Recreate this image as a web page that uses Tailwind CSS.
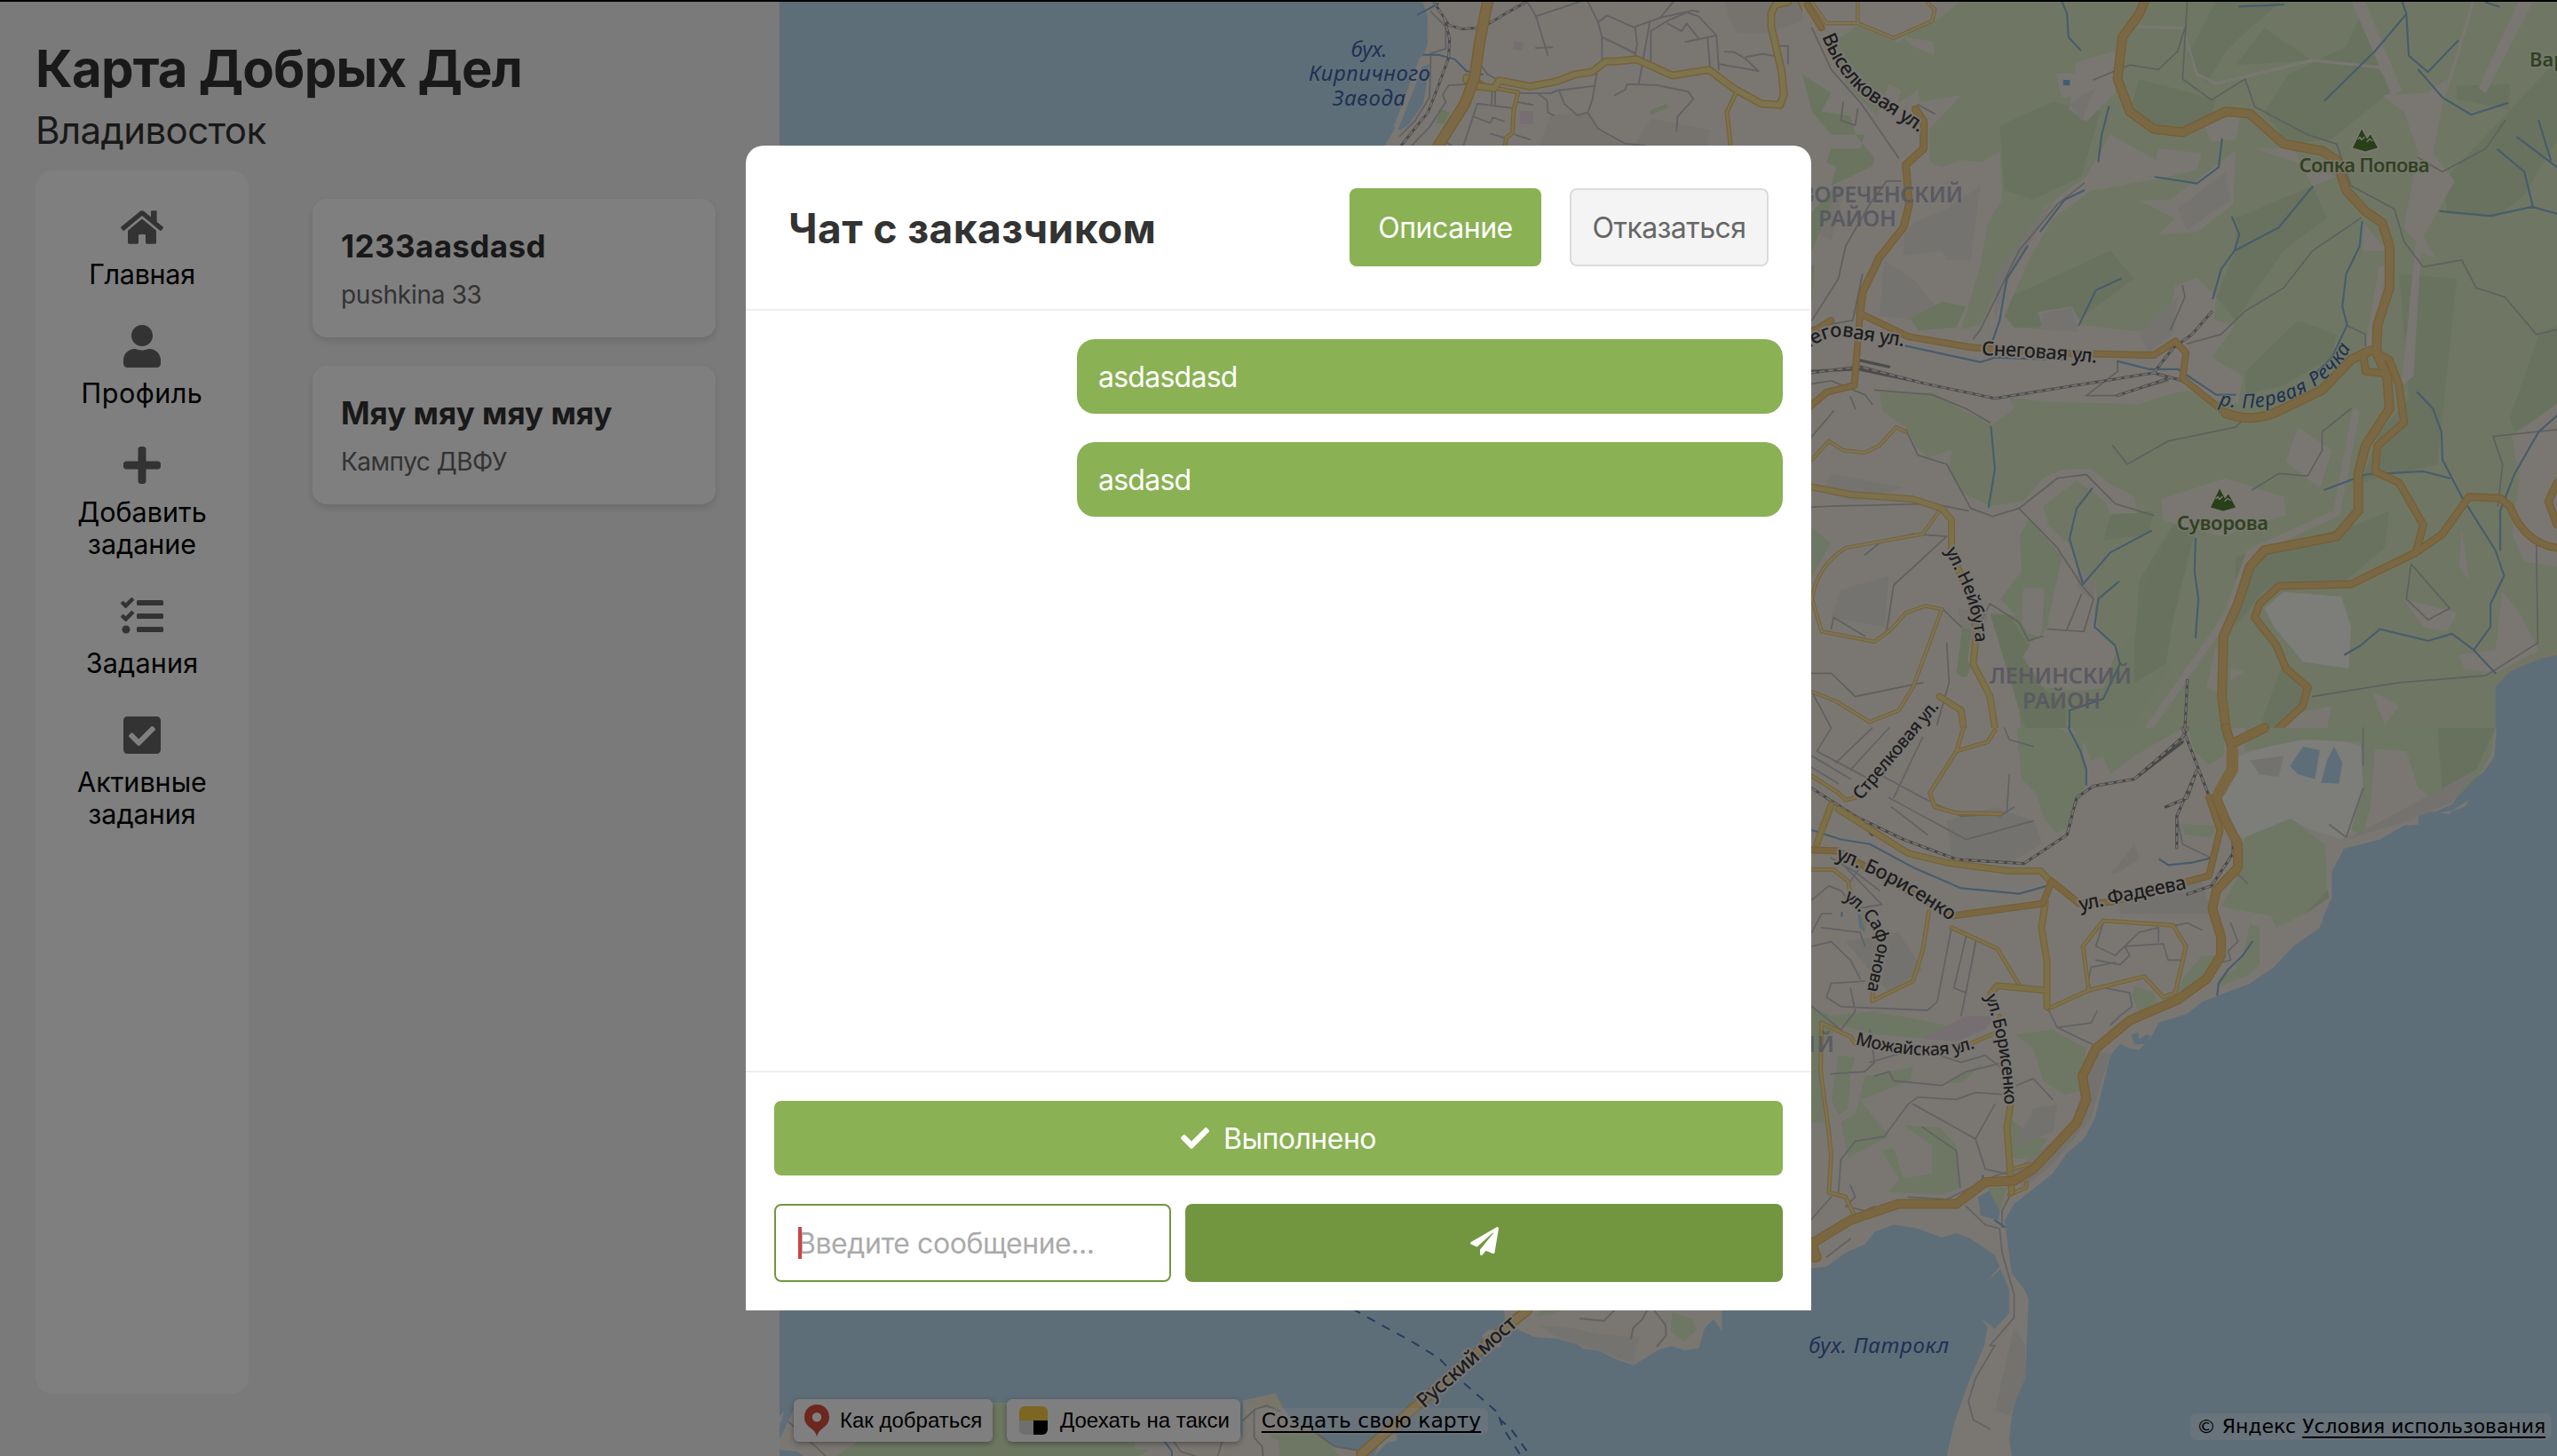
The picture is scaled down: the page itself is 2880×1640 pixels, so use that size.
<!DOCTYPE html>
<html lang="ru">
<head>
<meta charset="utf-8">
<title>Карта Добрых Дел</title>
<script src="https://cdn.jsdelivr.net/npm/@tailwindcss/browser@4"></script>
</head>
<body class="relative h-[1640px] w-[2880px] overflow-hidden bg-[#f5f5f5] font-[Inter,sans-serif] text-[#333]">

<div class="flex h-full">
  <!-- Sidebar -->
  <aside class="flex h-full w-[878px] shrink-0 flex-col px-10 pt-[42px]">
    <h1 class="text-[58px] leading-[70px] font-bold tracking-[-0.75px]">Карта Добрых Дел</h1>
    <p class="mt-[9px] text-[42px] leading-[52px] tracking-[-0.6px]">Владивосток</p>
    <div class="mt-[19px] flex">
      <nav class="flex h-[1378px] w-60 flex-col items-center gap-[39px] rounded-[20px] bg-white pt-10 text-center text-[30.5px] leading-9 text-black">
        <a class="flex flex-col items-center gap-[11px]">
          <svg class="size-12 fill-[#666]" viewBox="0 0 576 512"><path d="M280.37 148.26L96 300.11V464a16 16 0 0 0 16 16l112.06-.29a16 16 0 0 0 15.92-16V368a16 16 0 0 1 16-16h64a16 16 0 0 1 16 16v95.64a16 16 0 0 0 16 16.05L464 480a16 16 0 0 0 16-16V300L295.67 148.26a12.19 12.19 0 0 0-15.3 0zM571.6 251.47L488 182.56V44.05a12 12 0 0 0-12-12h-56a12 12 0 0 0-12 12v72.61L318.47 43a48 48 0 0 0-61 0L4.34 251.47a12 12 0 0 0-1.6 16.9l25.5 31A12 12 0 0 0 45.15 301l235.22-193.74a12.19 12.19 0 0 1 15.3 0L530.9 301a12 12 0 0 0 16.9-1.6l25.5-31a12 12 0 0 0-1.7-16.93z"/></svg>
          <span class="tracking-[-0.3px]">Главная</span>
        </a>
        <a class="flex flex-col items-center gap-[11px]">
          <svg class="size-12 fill-[#666]" viewBox="0 0 448 512"><path d="M224 256c70.7 0 128-57.3 128-128S294.7 0 224 0 96 57.3 96 128s57.3 128 128 128zm89.6 32h-16.7c-22.2 10.2-46.9 16-72.9 16s-50.6-5.8-72.9-16h-16.7C60.2 288 0 348.2 0 422.4V464c0 26.5 21.5 48 48 48h352c26.5 0 48-21.5 48-48v-41.6c0-74.2-60.2-134.4-134.4-134.4z"/></svg>
          <span class="tracking-[0.5px]">Профиль</span>
        </a>
        <a class="flex flex-col items-center gap-[11px]">
          <svg class="size-12 fill-[#666]" viewBox="0 0 448 512"><path d="M416 208H272V64c0-17.67-14.33-32-32-32h-32c-17.67 0-32 14.33-32 32v144H32c-17.67 0-32 14.33-32 32v32c0 17.67 14.33 32 32 32h144v144c0 17.67 14.33 32 32 32h32c17.67 0 32-14.33 32-32V304h144c17.67 0 32-14.33 32-32v-32c0-17.67-14.33-32-32-32z"/></svg>
          <span>Добавить<br>задание</span>
        </a>
        <a class="flex flex-col items-center gap-[11px]">
          <svg class="size-12 fill-[#666]" viewBox="0 0 512 512"><path d="M139.61 35.5a12 12 0 0 0-17 0L58.93 98.81l-22.7-22.12a12 12 0 0 0-17 0L3.53 92.41a12 12 0 0 0 0 17l47.59 47.4a12.78 12.78 0 0 0 17.61 0l15.59-15.62L156.52 69a12.09 12.09 0 0 0 .09-17zm0 159.19a12 12 0 0 0-17 0l-63.68 63.72-22.7-22.1a12 12 0 0 0-17 0L3.53 252a12 12 0 0 0 0 17L51 316.5a12.77 12.77 0 0 0 17.6 0l15.7-15.69 72.2-72.22a12 12 0 0 0 .09-16.9zM64 368c-26.49 0-48.59 21.5-48.59 48S37.53 464 64 464a48 48 0 0 0 0-96zm432 16H208a16 16 0 0 0-16 16v32a16 16 0 0 0 16 16h288a16 16 0 0 0 16-16v-32a16 16 0 0 0-16-16zm0-320H208a16 16 0 0 0-16 16v32a16 16 0 0 0 16 16h288a16 16 0 0 0 16-16V80a16 16 0 0 0-16-16zm0 160H208a16 16 0 0 0-16 16v32a16 16 0 0 0 16 16h288a16 16 0 0 0 16-16v-32a16 16 0 0 0-16-16z"/></svg>
          <span class="tracking-[0.2px]">Задания</span>
        </a>
        <a class="flex flex-col items-center gap-[11px]">
          <svg class="size-12 fill-[#666]" viewBox="0 0 448 512"><path d="M400 480H48c-26.51 0-48-21.49-48-48V80c0-26.51 21.49-48 48-48h352c26.51 0 48 21.49 48 48v352c0 26.51-21.49 48-48 48zm-204.686-98.059l184-184c6.248-6.248 6.248-16.379 0-22.627l-22.627-22.627c-6.248-6.248-16.379-6.249-22.628 0L184 302.745l-70.059-70.059c-6.248-6.248-16.379-6.248-22.628 0l-22.627 22.627c-6.248 6.248-6.248 16.379 0 22.627l104 104c6.249 6.25 16.379 6.25 22.628.001z"/></svg>
          <span>Активные<br>задания</span>
        </a>
      </nav>
      <div class="ml-[72px] flex flex-col gap-8 pt-8">
        <div class="h-[156px] w-[454px] rounded-2xl bg-white px-8 pt-8 shadow-[0_4px_8px_rgba(0,0,0,0.12)]">
          <h2 class="text-[35px] leading-[42px] font-bold tracking-[0.4px]">1233aasdasd</h2>
          <p class="mt-[17px] text-[28px] leading-[34px] tracking-[-0.3px] text-[#666]">pushkina 33</p>
        </div>
        <div class="h-[156px] w-[454px] rounded-2xl bg-white px-8 pt-8 shadow-[0_4px_8px_rgba(0,0,0,0.12)]">
          <h2 class="text-[35px] leading-[42px] font-bold">Мяу мяу мяу мяу</h2>
          <p class="mt-[17px] text-[28px] leading-[34px] tracking-[-0.5px] text-[#666]">Кампус ДВФУ</p>
        </div>
      </div>
    </div>
  </aside>

  <!-- Map -->
  <main class="relative h-full w-[2002px] shrink-0 overflow-hidden bg-[#f4eee6]">
    <svg class="absolute inset-0 h-full w-full" viewBox="878 0 2002 1640" fill="none" stroke-linecap="round" stroke-linejoin="round">
      <!-- western bay and southern waters -->
      <path fill="#bcdcf2" d="M878 0H1602L1608 20V50L1603 62L1597 77L1610 72L1609 80L1603 117L1587 140L1577 147L1572 143L1560 164H878ZM878 1400H2050V1640H878Z"/>

      <!-- north shore, upper centre -->
      <g transform="translate(1560 0) scale(.3333)" class="[&_path]:[vector-effect:non-scaling-stroke]">
        <path stroke="#f4eee6" stroke-width="6" d="M125 200L80 320L40 425"/>
        <path fill="#d2eab8" d="M190 370L218 380L200 420L172 415ZM892 375L950 350L960 362L900 388ZM1420 255H1440V320L1425 290Z"/>
        <path fill="#ecdde4" d="M435 140L468 142L465 170L432 168ZM455 375H500V420H455Z"/>
        <path fill="#ece7df" d="M1150 0H1440V60L1300 110H1190L1160 60ZM560 390L690 380L720 440L810 492H520ZM900 400L1100 440L1090 492H840Z"/>
        <g stroke="#c4c4c6" stroke-width="2">
          <path d="M480 5L510 55L550 187M510 55L660 5M510 162L565 160M685 5L720 75L733 125V200M720 75L750 52L840 92L930 60L975 5M733 125L845 180M845 92L852 150L845 188M895 72L858 280M898 210V105L955 70L1020 42L1060 55L1120 120L1128 235M1098 225L1090 130M1015 142L1120 120M955 80L1002 105L1020 80L1060 130M930 60L1040 35L1060 40M1148 175L1180 176L1220 200L1262 240L1130 217M1220 193L1275 182L1315 188M1328 155H1362V215M1440 195L1430 210L1440 230M715 250L700 340L685 380L720 435L810 485L880 492M588 305L710 290M588 305L605 350L650 390L685 380M452 315L560 315L590 303M520 318L548 340L550 380L570 390M776 322L812 303L818 284L920 288L1025 310L1042 335L988 395L985 442M362 310L360 355M372 308V355M450 345L500 355M312 350L430 365M312 350L265 492M300 395L355 415L365 397L402 410M358 452L400 465M440 455L490 472M210 482L225 492M155 40L205 90V165L155 180L150 330L100 410L50 460M280 285L215 288L195 320L205 345L150 430L90 492M325 220L345 250L380 270"/>
        </g>
        <path stroke="#86b6dc" stroke-width="2" d="M130 185H180L235 200L275 240L330 252M110 50L180 12"/>
        <g stroke="#999" stroke-width="3"><path d="M165 8L200 60L215 85L260 98L330 92L400 50L475 8M200 60L218 130L215 195L180 290L145 380L80 460L55 492"/></g>
        <g stroke="#f4eee6" stroke-width="1.5" stroke-dasharray="5 5"><path d="M165 8L200 60L215 85L260 98L330 92L400 50L475 8M200 60L218 130L215 195L180 290L145 380L80 460L55 492"/></g>
        <g stroke="#f0c26c"><path stroke-width="9" d="M295 270H275V262M300 290L370 298L385 272L490 292L580 275L640 252L700 243L745 208H780L850 200L970 255L1095 236L1180 300L1270 350L1335 355L1348 320L1340 240L1305 90V45L1320 15L1360 8M1405 0L1440 75"/><path stroke-width="5" d="M300 262L350 300M385 300L450 312L435 370L430 450L410 465L405 492M1190 305L1155 380L1168 492"/></g>
        <g stroke="#f7e89c"><path stroke-width="6" d="M295 270H275V262M300 290L370 298L385 272L490 292L580 275L640 252L700 243L745 208H780L850 200L970 255L1095 236L1180 300L1270 350L1335 355L1348 320L1340 240L1305 90V45L1320 15L1360 8M1405 0L1440 75"/><path stroke-width="2.5" d="M385 300L450 312L435 370L430 450L410 465L405 492M1190 305L1155 380L1168 492"/></g>
        <path stroke="#edbf68" stroke-width="13" d="M348 0L320 140L302 265L270 350L180 492"/>
        <path stroke="#f8d38a" stroke-width="10" d="M348 0L320 140L302 265L270 350L180 492"/>
      </g>

      <!-- north-east: forested hills -->
      <g transform="translate(2030 0) scale(.5421 .523)" class="[&_path]:[vector-effect:non-scaling-stroke]">
        <path fill="#deefc8" d="M0 0H1568V1570H0Z"/>
        <g fill="#d3e4bf">
          <path d="M860 0H1000L930 60L880 110L840 180L800 120ZM960 240L1010 160L1130 100L1165 20L1230 190L1100 300L1010 310ZM1360 185L1470 180V235L1360 215ZM1330 390L1568 130V300L1500 420L1440 470L1340 460ZM700 170L860 215L840 270L740 290L680 240ZM430 640L640 540L690 600L560 700L400 710ZM410 270L520 220L620 240L580 380L480 430L420 410ZM900 470L1060 400L1090 470L1000 540L900 690L860 640L900 540ZM920 800L1030 690L1110 720L1100 770L1000 830L920 850ZM1240 590L1360 600L1320 1000L1160 1040L1200 930L1260 860ZM1470 900L1530 720L1568 700V870L1480 930ZM700 1250L770 1130L820 1130L760 1380L740 1440L690 1500L690 1400ZM900 1200L1150 1130L1220 1100L1210 1180L1130 1250L960 1270L900 1350ZM960 60L1060 130L900 140ZM640 1110L730 1100L720 1150L625 1165ZM1000 1420L1060 1480L1030 1568H950Z"/>
        </g>
        <!-- built-up land and clearings -->
        <g fill="#f4eee6">
          <path d="M0 0H330L285 40L235 60L200 92L115 55L65 90L90 180L155 250L180 180L205 195L195 225L240 195L245 220L330 205L262 280L265 350L290 360L330 345L375 350L410 325L415 430L385 480L370 570L350 640L330 710L370 700L430 570L500 450L590 380L640 290L735 345L740 320L830 330L820 365L740 385L600 410L520 470L470 560L420 680L440 705L500 710L490 672L560 660L580 700L700 715L760 690L775 615L820 598L860 640L855 690L900 700L850 770L915 810L905 870L850 860L800 840L760 850L700 870L500 865L430 855L440 880L395 915L335 885L270 845H160L165 885L215 920L235 960L260 985L310 970L305 1005L330 1060L390 1090L460 1080L500 1030L540 1012L600 1010L635 1040L690 1070L695 1105L640 1105L630 1080L570 1035L500 1090L510 1130L560 1180L600 1290L620 1370L655 1400L640 1460L560 1490L620 1568H0Z"/>
          <path d="M570 135L650 110V200L590 262L555 235ZM527 158H570V205L540 210ZM700 432L765 430L830 380L900 325L895 440L820 500L740 505L775 470ZM745 1075L880 1030L1000 1070L1005 1108L870 1155L750 1120ZM1030 920L1100 970L1075 1050L1005 995ZM1165 480L1215 540L1165 540ZM830 260L910 250L900 300L850 305ZM940 320L1020 320L1060 400L1110 380L1000 340ZM1205 205L1300 200L1340 170L1310 330L1355 390L1290 510L1315 555L1285 545L1270 810L1245 830L1275 520L1250 490L1280 330L1250 240ZM1140 0H1168L1245 195L1225 205ZM1490 0H1520L1420 200L1405 190ZM1475 940L1568 870V1220L1500 1210L1475 1150L1490 1030ZM1455 1275L1490 1320L1530 1400L1440 1450L1375 1440L1365 1410L1440 1400ZM1370 1140L1385 1250L1365 1220ZM1250 1290L1360 1320L1340 1360L1290 1350ZM1185 1490L1240 1520L1210 1560ZM1010 1540L1100 1520L1090 1568H990ZM860 1390L880 1500L840 1480ZM890 1440L920 1445L890 1465ZM210 80L270 90L275 118L230 100Z"/>
        </g>
        <path fill="#deefc8" d="M340 985L362 985L360 1010L340 1005Z"/>
        <g stroke="#f4eee6"><path stroke-width="8" d="M1205 580L1175 760M1150 890L1110 1105L930 1190L880 1330L800 1450L720 1568"/><path stroke-width="3" d="M700 58L790 60L820 160L860 180L1060 130L1200 145L1230 190M1395 0L1340 190L1310 240"/></g>
        <path fill="#fbfaf4" d="M960 1310L1000 1275L1120 1285L1140 1350L1135 1440L1040 1425L980 1350Z"/>
        <g fill="#ebe6de">
          <path d="M230 480L300 450L370 400L350 560L300 560L290 540L210 550V510ZM40 430L90 400L60 520L30 500ZM170 560L230 600L310 700L160 680ZM500 675L560 662L575 715L495 710ZM590 200L610 190L580 260L555 225ZM60 1020L210 1050L110 1080L40 1060ZM80 1270L180 1240L170 1350L60 1330ZM780 450L880 370L890 430L800 495ZM700 720L780 640L770 720L720 760ZM400 600L500 450L520 440L430 600L400 690Z"/>
        </g>
        <g fill="#d5e8bf">
          <path d="M0 160L60 200L40 240L100 250L110 290L150 340L145 358L60 400L70 360L50 350L60 320L120 320L130 290L60 290L20 240ZM225 685L290 650L340 660L320 705L240 712ZM0 580L25 570L20 650ZM0 480L70 400L60 440L20 540ZM325 1420L355 1430L340 1460L320 1450Z"/><path fill="#d9eecb" d="M0 1120L60 1170L20 1240H0Z"/>
        </g>
        <!-- woods around the Leninsky district -->
        <g transform="translate(18.4 726.6) scale(.6149 .6373)">
          <path fill="#dbecc5" d="M735 615L850 745L800 970L775 1024L745 1030L720 1075L780 1180L900 1195L990 1180L1030 1060L1100 990L1200 1090L1230 1090L1010 1440L1000 1500L970 1480L950 1410L935 1510L920 1540L890 1415L840 1450V1560H720L710 1480L755 1450L750 1380L715 1375L700 1250L605 930L690 940L640 885L710 790L705 670Z"/>
          <path fill="#d0e2bb" d="M1215 650L1290 660L1230 900L1200 1100L1090 1170L1095 1000L1130 840ZM605 935L670 940L740 1050L720 1080L790 1190L860 1240V1400L780 1480L700 1250Z"/>
          <path fill="#f4eee6" d="M718 846L788 850L780 990L770 1010L730 1000L712 960ZM845 755L960 830L965 890L920 1000L1025 1055L990 1185L900 1195L780 1180L715 1080L745 1030L810 980L800 960Z"/>
          <path fill="#ebe6de" d="M495 915L600 935L560 1040L520 1060ZM900 770L960 830L955 890L900 850Z"/>
          <path fill="#d3e6bd" d="M510 980L540 990L525 1130L510 1150L492 1130Z"/>
        </g>
        <path fill="#bcdcf2" d="M1440 1480L1470 1445L1568 1405V1570H1440Z"/>
        <path stroke="#f3e4c8" stroke-width="3" d="M1468 1445L1510 1420L1568 1408"/>
        <path fill="#86b6dc" d="M542 172H556V184H542Z"/>
        <g stroke="#bfc1bb" stroke-width="1.8">
          <path d="M800 0L790 170L850 215L920 170L940 230L1050 290L1110 310L1140 400L1230 450L1250 520L1290 575L1370 560L1400 620L1460 640L1525 720L1568 710M605 172L680 140L740 150L780 110L795 60M1460 260L1420 320L1330 370L1280 340M800 740L870 720L920 670L1000 620L1060 540L1160 470M765 710L795 640L790 615M645 960L675 1000L760 950L900 920L915 905M935 1055L990 1020L1050 1025L1080 970V930L1140 880M1170 745V720L1130 700M1568 925L1435 940L1455 1000L1445 1090M1525 1160L1528 1385L1420 1455L1240 1470L1060 1500M1265 1215L1255 1290L1300 1335L1345 1310L1265 1215M150 840L270 850L340 880L390 910M20 60L60 150L120 220L200 340M240 225L275 245M85 220L80 260L110 270L115 235M205 390L175 390L140 440L90 530L75 600L20 690M125 590L105 690L20 705M0 830L60 820L130 850L145 870M20 940L65 885M100 855L110 880M20 1092L60 1090L270 1085L345 1100M215 925L240 980L300 1000L350 1095L395 1112L450 1095L530 1030L590 1022L650 1085L730 1110M450 1095L530 1180L580 1260L605 1290L585 1360L510 1355M580 1280L550 1355M130 1195L160 1170L230 1150L300 1155L190 1260L175 1360M60 1355L65 1330L130 1370M0 1450L60 1450L110 1500L250 1470M300 1385L305 1470L280 1560M290 1310L330 1350M20 1490L60 1568M370 1340L390 1300L450 1340L470 1380L500 1370"/>
          <path d="M355 730L370 710L450 540L530 440L585 395M655 780V800L590 852H650L760 820"/>
        </g>
        <g stroke="#8fb9d8" stroke-width="2.2">
          <path d="M540 5L550 30L553 80L578 108M637 230L622 290L615 348M585 410L545 430L495 498M468 530L425 600L410 690L395 735M733 381L820 395L865 360L872 300M893 468L908 505L898 540L990 490L1060 402M898 540L870 580L853 643M662 600L610 625L575 700M1163 478L1158 530L1130 590L1122 660L1132 700L1100 770L1060 810M215 745L370 780L400 770L550 775M655 778L720 795H780L860 850H900M392 920L400 1010L387 1092M602 1052L570 1095L555 1160L583 1258L640 1190L725 1143M657 1253L615 1290L607 1350L650 1390L660 1430L625 1505L555 1530V1568M817 1160L815 1230L823 1290L817 1372M1085 1055L1170 1022L1290 1015L1345 1030M1278 845L1310 880L1328 930L1330 990L1370 1070L1440 1185L1458 1240L1430 1300V1350L1395 1400L1440 1450M1568 895L1530 930L1480 1020L1450 1100V1185M1127 1410L1160 1390L1200 1355L1300 1380L1350 1365L1395 1400M1085 217L1190 110L1255 30L1245 0M1255 30L1260 120L1300 155L1362 88M1280 150L1330 210L1390 247L1465 222M1325 455L1430 465L1518 445L1500 370L1445 322M1485 295L1568 360M1530 260L1555 345M1515 445L1568 460M908 14L1000 10M1420 5L1447 14"/>
        </g>
        <g stroke="#999" stroke-width="3.2"><path d="M0 805L120 790L250 825L400 858L730 803L790 820L830 850M850 672L810 720L770 750L730 803M655 852L760 815M115 775L180 790M0 800L115 795L240 822M800 1465L795 1568"/></g>
        <g stroke="#efe9e0" stroke-width="1.6" stroke-dasharray="5 5"><path d="M0 805L120 790L250 825L400 858L730 803L790 820L830 850M850 672L810 720L770 750L730 803M655 852L760 815M800 1465L795 1568"/></g>
        <g stroke="#f0c876" stroke-width="4.5"><path d="M20 5L50 50H115L190 82L270 45L275 20L260 5M115 50V0M20 990L55 950L85 970L130 975L160 960L195 920L215 930M20 1290Q30 1220 90 1180L250 1150L285 1100M20 1290L40 1360L150 1382L185 1355L215 1320L255 1305L290 1312L230 1480L200 1530L140 1555M20 1490L70 1510L140 1555"/></g>
        <g stroke="#f9eab0" stroke-width="2.2"><path d="M20 5L50 50H115L190 82L270 45L275 20L260 5M115 50V0M20 990L55 950L85 970L130 975L160 960L195 920L215 930M20 1290Q30 1220 90 1180L250 1150L285 1100M20 1290L40 1360L150 1382L185 1355L215 1320L255 1305L290 1312L230 1480L200 1530L140 1555M20 1490L70 1510L140 1555"/></g>
        <path stroke="#eec672" stroke-width="8" d="M0 1045L100 1065L230 1075L290 1095L310 1120V1190L350 1290L362 1360L355 1430L390 1500L400 1568M285 1500L330 1530L335 1568"/>
        <path stroke="#f6e296" stroke-width="5.5" d="M0 1045L100 1065L230 1075L290 1095L310 1120V1190L350 1290L362 1360L355 1430L390 1500L400 1568M285 1500L330 1530L335 1568"/>
        <g stroke="#eabc66">
          <path stroke-width="8" d="M20 715L60 690M10 10L40 60M0 890L50 845L108 830L120 675L220 725L350 748L510 760L730 765L775 735L797 760L790 815L880 890"/>
          <path stroke-width="9" d="M235 235L252 260V320L215 355L222 440L210 490L160 555L125 630L120 675M1185 755L1220 775L1240 830L1250 910L1195 960L1190 1015L1240 1040L1290 1130L1275 1190M1568 1180Q1500 1170 1470 1090L1450 1073L1385 1070L1330 1150L1275 1190L1140 1258L990 1262L950 1300L940 1330L985 1390L1005 1440L1050 1480L1040 1520L990 1568M1165 760L1170 800L1215 805M1568 1040L1550 1080L1568 1130"/>
          <path stroke-width="11" d="M712 0L700 30L665 80L655 170L680 240L730 278L790 285L880 240L930 245L1000 310L1080 325L1110 345L1130 410L1170 455L1205 480L1220 530V620L1195 700L1193 760L1215 810L1220 880L1170 960L1155 1020V1100L1110 1155L960 1185L930 1220L905 1300L875 1370L872 1500L880 1568M880 890Q930 910 980 890L1080 840L1140 775L1180 755"/>
        </g>
        <g stroke="#f4cf88">
          <path stroke-width="5.5" d="M20 715L60 690M10 10L40 60M0 890L50 845L108 830L120 675L220 725L350 748L510 760L730 765L775 735L797 760L790 815L880 890"/>
          <path stroke-width="6.5" d="M235 235L252 260V320L215 355L222 440L210 490L160 555L125 630L120 675M1185 755L1220 775L1240 830L1250 910L1195 960L1190 1015L1240 1040L1290 1130L1275 1190M1568 1180Q1500 1170 1470 1090L1450 1073L1385 1070L1330 1150L1275 1190L1140 1258L990 1262L950 1300L940 1330L985 1390L1005 1440L1050 1480L1040 1520L990 1568M1165 760L1170 800L1215 805M1568 1040L1550 1080L1568 1130"/>
          <path stroke-width="8.5" d="M712 0L700 30L665 80L655 170L680 240L730 278L790 285L880 240L930 245L1000 310L1080 325L1110 345L1130 410L1170 455L1205 480L1220 530V620L1195 700L1193 760L1215 810L1220 880L1170 960L1155 1020V1100L1110 1155L960 1185L930 1220L905 1300L875 1370L872 1500L880 1568M880 890Q930 910 980 890L1080 840L1140 775L1180 755"/>
        </g>
      </g>

      <!-- south-east: coast -->
      <g transform="translate(2030 820) scale(.5421 .523)" class="[&_path]:[vector-effect:non-scaling-stroke]">
        <path fill="#bcdcf2" d="M0 0H1568V1568H0Z"/>
        <path fill="#f4eee6" d="M0 0H1442L1438 60L1415 95L1380 120L1350 165L1315 180L1280 182V208L1250 210L1200 240L1125 260L1100 310V365L1085 400L1075 430L1020 470L980 515L930 550L830 590L800 615L740 635L725 665L700 693L680 690L660 680L640 705L620 790L608 840L585 885L550 915L520 960L440 1025L420 1060L435 1175L462 1210L470 1230L463 1400L445 1440L435 1480L430 1530L435 1568H300L315 1500L345 1410L378 1330L385 1290L372 1272L400 1294L430 1260V1210L412 1165L385 1190L410 1160L400 1135L350 1100L320 1088L290 1097L240 1078L190 1070L150 1085L130 1112L90 1130L50 1160L0 1165ZM1325 182L1350 178L1345 186ZM1350 178L1385 155L1375 170Z"/>
        <path fill="#fafaf4" d="M905 60L1000 30L1090 20L1165 40V130L1140 225L1120 240L1060 220L1010 195L920 240L880 210L870 150Z"/>
        <path fill="#bcdcf2" d="M683 660L697 655L700 670L715 660L725 662L712 680L690 682ZM1013 82L1040 40L1075 48L1065 110L1030 100ZM1090 70L1105 40L1122 75L1115 120L1078 118ZM365 1010L400 990L415 1000L408 1060L370 1050ZM115 400L135 410L130 440L118 430Z"/>
        <g fill="#dbefc6">
          <path d="M445 0H530L580 20L590 120L550 215L530 228L505 200L485 140L455 110ZM560 0H790L690 60L640 100L625 60L600 70L590 40ZM800 0H880L875 60L845 80L815 50ZM920 0H1440L1430 60L1410 95L1360 150L1320 160L1280 130L1255 50L1190 45L1180 170L1165 230L1140 220L1165 130L1160 30L1040 25L920 50ZM920 235L1015 195L1085 250L1090 300L1085 370L1035 405L985 430L975 405L870 385L900 330ZM788 207L860 210L850 235L795 230ZM930 420L950 430V510L930 530L870 555L865 540L900 520L920 470ZM790 540L830 490L860 490L840 530L780 570ZM690 555L730 570L740 600L700 610L685 580ZM0 590L60 620L150 610L300 640L270 670L150 660L80 640L40 680L45 850H0ZM440 660L520 650L590 690L580 780L545 790L500 760L480 690ZM75 705L110 710L100 745L95 820L75 835L60 800ZM130 750L230 730L225 760L120 800L180 880L95 925L80 850L110 830ZM210 855L285 860L320 900L330 990L290 1005L180 1000L200 970L165 910L190 905L210 970L270 960V900ZM380 720L330 765L295 765ZM430 840L480 880L510 885L480 930L430 925ZM385 990H425L410 1040ZM590 735L610 770L600 785ZM118 390L140 400L130 440Z"/>
        </g>
        <path fill="#d0e3bc" d="M1320 0H1440L1400 90L1330 150ZM1040 405L1090 350L1080 300L1095 365Z"/>
        <path fill="#ecdfe4" d="M245 670L300 640L340 620L400 620L380 650L320 675Z"/>
        <path fill="#e9e4dc" d="M930 70L1000 60L990 105L950 100ZM640 315L690 250L700 280L660 310ZM300 200L400 170L480 200L500 250L430 290L310 280ZM480 820L530 810L520 870L440 900ZM600 700L640 700L600 840L520 940L460 990L430 960L560 860ZM1400 90L1350 160L1260 200L1130 240L1240 180ZM440 1290L463 1330V1400L430 1480L400 1470ZM90 460L200 440L250 520L180 570ZM650 350L830 330L850 400L660 400Z"/>
        <g stroke="#c4c4c8" stroke-width="1.8">
          <path d="M20 60L100 110M20 85L75 120M60 0L30 50L130 105M145 0L70 75M180 0L100 90M420 0L430 25L480 40M430 100L425 180M440 170L410 190M160 100L250 150L330 190L400 185M185 170L260 230M180 150L340 240L480 200M250 20L190 150M20 370L55 340L80 350L110 390L165 380M60 280L110 310L160 350M90 300L165 380M120 300L100 330M20 440L40 400H60M20 470L60 460L100 500L120 540M40 430L120 440L130 470M130 545L60 550L50 580L80 600L260 608L280 590L310 430M340 450L315 560L340 570L362 450M360 465L330 620M20 600L80 650L110 610L100 560M625 420L610 470L650 490L700 440L740 430M610 500L660 510L680 490L670 470L750 465L760 500H785M740 430V460M595 540L600 515L650 505M775 425L800 420L830 435M890 420L905 460L885 480L890 500L870 505M510 605L530 645L600 635L612 610M630 560L680 570L685 600L660 620L640 640M530 645L620 690M140 650L150 720L130 740L60 745M150 750L180 740L190 760L290 770L340 740L420 720M140 720L240 690L330 720L380 705L430 745M75 1000L80 930L110 890L170 880L220 810L240 795L320 800L360 785L430 790M230 810L360 885L400 810M360 885L380 950L425 960M250 860L320 910L328 990M445 770L480 755L520 800M100 985L110 1010L90 1030L130 1040L150 1030M0 1080L60 1010M220 1010L300 1015L350 990L400 965L430 955M340 1030L380 1070L410 1078L415 1130L440 1220V1270L390 1330L400 1330L360 1400L345 1450L355 1490L390 1510M50 1140L100 1100M415 1075V1040L430 1010M1165 0V80M1165 130L1130 235L1095 208M780 200L790 250L850 280M905 315L925 335"/>
        </g>
        <g stroke="#8fb9d8" stroke-width="2.2"><path d="M20 220L80 240L140 250L230 300L330 345L450 357L508 340M553 0L578 50L590 90V122M742 283L760 295L810 290L850 280M935 460L915 490L885 520L865 550L862 575M375 965V985M400 1060L420 1075M82 398V405"/></g>
        <g stroke="#8e8e8e" stroke-width="3.2"><path d="M20 130L110 190L210 240L320 283L460 292L550 230L570 150L605 125L690 110L790 20L800 0M790 0L850 160L895 240V270L850 340L800 358M820 90L778 190V258M820 90L800 150L755 170M690 110L790 30M110 190L145 230"/></g>
        <g stroke="#efe9e0" stroke-width="1.8" stroke-dasharray="5 5"><path d="M20 130L110 190L210 240L320 283L460 292L550 230L570 150L605 125L690 110L790 20L800 0M790 0L850 160L895 240V270L850 340L800 358M820 90L778 190V258M820 90L800 150L755 170"/></g>
        <g stroke="#f0c876" stroke-width="5"><path d="M0 90L75 140L90 155L110 150M335 0L320 50L265 140L275 170L320 183L412 185M320 50L385 30L400 5M0 305L65 305L95 330L100 360M263 395L250 480L230 545L145 588L147 565M310 430L405 475L450 552M583 470L625 415L770 425L797 470L775 570L750 580L710 535L595 565L583 470M510 605L595 565M40 635L100 665L110 680M40 635L38 740L55 870L60 920L55 1000L90 1010L110 1055M350 680L405 655L410 620M435 950L470 940M430 1005L465 990V980"/></g>
        <g stroke="#fae79e" stroke-width="2.5"><path d="M0 90L75 140L90 155L110 150M335 0L320 50L265 140L275 170L320 183L412 185M320 50L385 30L400 5M0 305L65 305L95 330L100 360M263 395L250 480L230 545L145 588L147 565M310 430L405 475L450 552M583 470L625 415L770 425L797 470L775 570L750 580L710 535L595 565L583 470M510 605L595 565M40 635L100 665L110 680M40 635L38 740L55 870L60 920L55 1000L90 1010L110 1055M350 680L405 655L410 620M435 950L470 940M430 1005L465 990V980"/></g>
        <path stroke="#eec672" stroke-width="8" d="M60 165L30 250M75 175L220 270L300 290L430 308H495L515 330M505 375L497 430L508 500V600M392 572L405 555L505 565M432 815L425 860L435 1000"/>
        <path stroke="#f6e08e" stroke-width="5.5" d="M60 165L30 250M75 175L220 270L300 290L430 308H495L515 330M505 375L497 430L508 500V600M392 572L405 555L505 565M432 815L425 860L435 1000"/>
        <g stroke="#eabc66">
          <path stroke-width="8" d="M0 262L75 265L310 405L500 378L518 330L575 378L640 375L845 318L868 220L845 150"/>
          <path stroke-width="11" d="M880 0L895 50V90L860 150L880 200L905 250V300L860 350L852 390L870 450V490L840 540L780 585L680 630L610 690L582 750L590 800L570 850L480 950L440 975L380 978L320 1025L200 1025L100 1060L20 1110L30 1140H0M900 30L960 0"/>
        </g>
        <g stroke="#f4cf82">
          <path stroke-width="5.5" d="M0 262L75 265L310 405L500 378L518 330L575 378L640 375L845 318L868 220L845 150"/>
          <path stroke-width="8.5" d="M880 0L895 50V90L860 150L880 200L905 250V300L860 350L852 390L870 450V490L840 540L780 585L680 630L610 690L582 750L590 800L570 850L480 950L440 975L380 978L320 1025L200 1025L100 1060L20 1110L30 1140H0M900 30L960 0"/>
        </g>
        <path stroke="#f4cf82" stroke-width="13" d="M893 50V90L865 140"/>
      </g>

      <!-- southern cape, bridge and island -->
      <g transform="translate(1400 1476) scale(.3333)" class="[&_path]:[vector-effect:non-scaling-stroke]">
        <path fill="#f4eee6" d="M880 -10L888 40L940 70L985 90L1060 95L1130 115L1150 130L1200 135L1260 165L1320 185L1400 135L1450 120L1490 135L1540 128L1560 60L1590 30L1620 70L1618 40V-10ZM808 85L830 65L880 65L870 125L830 120ZM0 305L110 280L135 330L160 360L240 410L300 455L400 478L380 500H0ZM455 480L490 445L520 440V420L470 420L440 500Z"/>
        <path fill="#ebe6de" d="M1000 50L1120 60L1200 80L1340 90L1320 180L1200 135L1070 95Z"/>
        <path fill="#f3ead0" d="M0 310L110 282L135 330L60 330Z"/>
        <path fill="#dbefc6" d="M1450 5L1520 30L1530 70L1490 105L1445 70ZM985 20L1010 0H1080L1040 12ZM85 420L250 415L300 460L330 492H125L120 440Z"/>
        <g stroke="#c4c0ba" stroke-width="2"><path d="M1140 28L1220 35L1255 0M1365 0L1350 30L1318 60L1312 95M1390 0L1428 50L1430 85L1400 120M0 372L40 335L80 322L125 340M38 340V430L65 460L68 492M240 410L310 460L400 475"/></g>
        <g stroke="#4f78b8" stroke-width="2" stroke-dasharray="10 9"><path stroke-linecap="butt" d="M370 -5L460 45L570 105L660 160L740 240L860 345L870 370L905 400L970 490M865 360L880 400L940 492"/></g>
        <path stroke="#eabc66" stroke-width="12" d="M960 0L860 80L740 190L600 310L400 485"/>
        <path stroke="#fadb98" stroke-width="9" d="M960 0L860 80L740 190L600 310L400 485"/>
      </g>
      <g transform="translate(870 1540) scale(.3333)">
        <path fill="#f4eee6" d="M24 280L20 250L60 170L75 130L100 120H1560L1590 250V310H24Z"/>
        <path fill="#bcdcf2" d="M24 280L85 285L105 300H24Z"/>
        <path fill="#f4eee6" d="M24 165L38 150L30 185L24 190Z"/>
        <path fill="#d9eec4" d="M745 125Q768 110 790 125V250H1225V275L1275 280L1240 300H215L250 275L290 250H745Z"/>
        <path stroke="#c4c0ba" stroke-width="5" d="M55 185L180 300M1355 250L1380 285L1430 300M1520 250L1505 300"/>
        <path stroke="#86b6dc" stroke-width="6" d="M1325 250L1350 285V300"/>
      </g>

      <!-- labels -->
      <defs>
        <path id="r1" d="M2052 41Q2072 92 2112 117T2162 150"/>
        <path id="r2" d="M2024 408Q2052 370 2092 382L2150 391"/>
        <path id="r3" d="M2232 400Q2290 402 2364 409"/>
        <path id="r4" d="M2499 456Q2545 467 2592 444T2652 380"/>
        <path id="r5" d="M2191 620L2208 655Q2224 692 2225 728"/>
        <path id="r6" d="M2096 902L2188 792"/>
        <path id="r7" d="M2067 968Q2130 990 2200 1040"/>
        <path id="r8" d="M2076 1012Q2124 1048 2112 1075L2102 1121"/>
        <path id="r9" d="M2343 1026L2468 1000"/>
        <path id="r10" d="M2089 1176Q2180 1200 2228 1179"/>
        <path id="r11" d="M2236 1122Q2256 1180 2258 1250"/>
        <path id="r12" d="M1604 1587L1713 1490"/>
      </defs>
      <g class="font-['Noto_Sans',sans-serif] text-[22px] font-medium [paint-order:stroke]" fill="#3a3a3e" stroke="#f4eee6" stroke-width="4">
        <text><textPath href="#r1" textLength="157">Выселковая ул.</textPath></text>
        <text><textPath href="#r2" textLength="131">Снеговая ул.</textPath></text>
        <text><textPath href="#r3" textLength="130">Снеговая ул.</textPath></text>
        <text class="text-[20px]"><textPath href="#r5" textLength="110">ул. Нейбута</textPath></text>
        <text class="text-[20px]"><textPath href="#r6" textLength="138">Стрелковая ул.</textPath></text>
        <text><textPath href="#r7" textLength="148">ул. Борисенко</textPath></text>
        <text class="text-[20px]"><textPath href="#r8" textLength="120">ул. Сафонова</textPath></text>
        <text><textPath href="#r9" textLength="123">ул. Фадеева</textPath></text>
        <text class="text-[20px]"><textPath href="#r10" textLength="138">Можайская ул.</textPath></text>
        <text class="text-[20px]"><textPath href="#r11" textLength="125">ул. Борисенко</textPath></text>
        <text class="text-[23px]"><textPath href="#r12" textLength="142">Русский мост</textPath></text>
      </g>
      <g class="font-['Noto_Sans',sans-serif] text-[24px] italic" fill="#3f62a6">
        <text x="1542" y="64" text-anchor="middle">бух.</text>
        <text x="1474" y="91" textLength="137">Кирпичного</text>
        <text x="1501" y="118.500" textLength="82">Завода</text>
        <text x="2037" y="1523.500" textLength="158">бух. Патрокл</text>
        <text class="text-[22px] [paint-order:stroke]" stroke="#deefc8" stroke-width="2"><textPath href="#r4" textLength="174">р. Первая Речка</textPath></text>
      </g>
      <g class="font-['Noto_Sans',sans-serif] text-[25px] font-semibold" fill="#b4b4c4">
        <text x="1980" y="227.500" textLength="231">ПЕРВОРЕЧЕНСКИЙ</text>
        <text x="2048" y="255" textLength="88">РАЙОН</text>
        <text x="2241" y="770" textLength="160">ЛЕНИНСКИЙ</text>
        <text x="2278" y="797.500" textLength="88">РАЙОН</text>
        <text x="1940" y="1184.500" textLength="126">РУССКИЙ</text>
      </g>
      <g class="font-['Noto_Sans',sans-serif] text-[22px] font-semibold [paint-order:stroke]" fill="#60853c" stroke="#f0eee0" stroke-width="3">
        <text x="2589.500" y="193.500" textLength="147">Сопка Попова</text>
        <text x="2452" y="596.500" textLength="103">Суворова</text>
        <text x="2849" y="75">Вар</text>
      </g>
      <defs><g id="peak"><path stroke="#f4eee6" stroke-width="4" fill="#4f8030" d="M0 21L10 0L16 11L20 6L28 21L14 25Z"/><path fill="#4f8030" d="M0 21L10 0L16 11L20 6L28 21L14 25Z"/><path stroke="#f4eee6" stroke-width="1.500" d="M6 11L8 9L10 12L13 9M16 14L19 11L22 13"/></g></defs>
      <use href="#peak" x="2650" y="145.500"/>
      <use href="#peak" x="2490" y="550.500"/>
    </svg>

    <!-- map controls -->
    <div class="absolute bottom-4 left-4 flex text-black">
      <button class="flex h-12 w-56 items-center rounded-md bg-white pl-[11px] font-['Liberation_Sans',Arial,sans-serif] text-[24px] shadow-[0_2px_6px_rgba(0,0,0,0.35)]">
        <svg class="-mt-px h-9 w-[30px] shrink-0" viewBox="0 0 30 36"><path fill="#d8513f" fill-rule="evenodd" d="M15 0C7 0 1 6 1 14C1 20 4 23.500 8 26.500C11 28.500 14 31.500 15 36C16 31.500 19 28.500 22 26.500C26 23.500 29 20 29 14C29 6 23 0 15 0ZM15 9A5.200 5.200 0 1 1 15 19.400A5.200 5.200 0 1 1 15 9Z"/></svg>
        <span class="ml-[11px] whitespace-nowrap">Как добраться</span>
      </button>
      <button class="ml-4 flex h-12 w-[263px] items-center rounded-md bg-white pl-[14px] font-['Liberation_Sans',Arial,sans-serif] text-[24px] shadow-[0_2px_6px_rgba(0,0,0,0.35)]">
        <span class="grid size-8 shrink-0 grid-cols-2 grid-rows-2 overflow-hidden rounded-md"><i class="col-span-2 bg-[#f8cc44]"></i><i class="bg-[#dedede]"></i><i class="bg-black"></i></span>
        <span class="ml-[14px] whitespace-nowrap">Доехать на такси</span>
      </button>
      <a class="mt-[10px] ml-4 flex h-[30px] w-[263px] items-center justify-center rounded-md bg-white/30 font-['DejaVu_Sans',Verdana,sans-serif] text-[23.4px] whitespace-nowrap underline decoration-2 underline-offset-4">Создать свою карту</a>
    </div>
    <div class="absolute right-[6px] bottom-[18px] flex h-[30px] w-[407px] items-center justify-center gap-[7px] rounded-md bg-white/30 font-['DejaVu_Sans',Verdana,sans-serif] text-[21.9px] whitespace-nowrap text-black">
      <span>© Яндекс</span><a class="underline decoration-2 underline-offset-4">Условия использования</a>
    </div>
  </main>
</div>

<!-- Modal -->
<div class="absolute inset-0 flex items-center justify-center bg-black/50 shadow-[inset_0_2px_0_#000]">
  <section class="flex h-[1312px] w-[1200px] flex-col rounded-t-[20px] bg-white">
    <header class="flex h-[186px] shrink-0 items-center gap-8 border-b-2 border-[#eee] px-12">
      <h2 class="mr-auto pt-0.5 text-[46px] font-bold tracking-[0.45px]">Чат с заказчиком</h2>
      <button class="h-[88px] w-[216px] rounded-lg bg-[#8ab153] pt-0.5 text-[32px] tracking-[-0.45px] text-white">Описание</button>
      <button class="h-[88px] w-56 rounded-lg border-2 border-[#dadcdc] bg-[#f4f4f4] pt-0.5 text-[32px] tracking-[-0.55px] text-[#666]">Отказаться</button>
    </header>
    <div class="flex grow flex-col items-end gap-8 p-8">
      <div class="flex h-[84px] w-[795px] items-center rounded-[20px] bg-[#8ab153] px-6 pt-0.5 text-[32px] tracking-[-0.75px] text-white">asdasdasd</div>
      <div class="flex h-[84px] w-[795px] items-center rounded-[20px] bg-[#8ab153] px-6 pt-0.5 text-[32px] tracking-[-0.75px] text-white">asdasd</div>
    </div>
    <footer class="flex flex-col gap-8 border-t-2 border-[#eee] p-8">
      <button class="flex h-[84px] items-center justify-center gap-4 rounded-lg bg-[#8ab153] text-[32px] tracking-[-0.5px] text-white">
        <svg class="size-8 fill-white" viewBox="0 0 512 512"><path d="M173.898 439.404l-166.4-166.4c-9.997-9.997-9.997-26.206 0-36.204l36.203-36.204c9.997-9.998 26.207-9.998 36.204 0L192 312.69 432.095 72.596c9.997-9.997 26.207-9.997 36.204 0l36.203 36.204c9.997 9.997 9.997 26.206 0 36.204l-294.4 294.401c-9.998 9.997-26.207 9.997-36.204-.001z"/></svg>
        <span class="pt-0.5">Выполнено</span>
      </button>
      <div class="flex h-[88px] gap-4">
        <div class="flex w-[447px] items-center rounded-lg border-2 border-[#72963f] pl-[25px] text-[32px] tracking-[-0.45px] text-[#aaa]"><span class="z-10 h-9 w-1 bg-[#cc4444]"></span><span class="-ml-[5px] pt-0.5 whitespace-nowrap">Введите сообщение...</span></div>
        <button class="flex grow items-center justify-center rounded-lg bg-[#72963f]"><svg class="-mt-1 size-8 fill-white" viewBox="0 0 512 512"><path d="M476 3.200L12.500 270.600c-18.100 10.400-15.800 35.600 2.200 43.200L121 358.400l287.300-253.200c5.500-4.900 13.300 2.600 8.600 8.300L176 407v80.500c0 23.600 28.500 32.900 42.500 15.800L282 426l124.600 52.200c14.200 6 30.400-2.900 33-18.200l72-432C515 7.800 493.300-6.800 476 3.200z"/></svg></button>
      </div>
    </footer>
  </section>
</div>
</body>
</html>
